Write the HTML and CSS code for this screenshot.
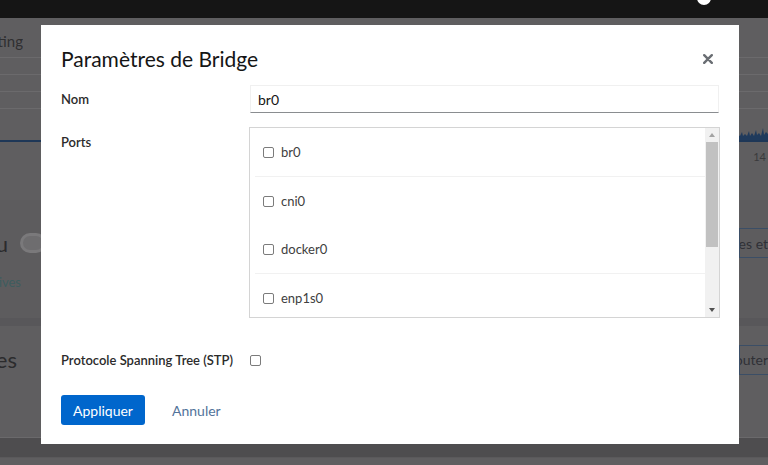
FILE: index.html
```html
<!DOCTYPE html>
<html lang="fr">
<head>
<meta charset="utf-8">
<title>Paramètres de Bridge</title>
<link rel="stylesheet" href="styles.css">
</head>
<body>
<div class="topbar"><span class="avatar"></span></div>

<div class="page">
  <section class="sec-a">
    <div class="hdr">
      <div class="clip-left big"><span>Routing</span></div>
    </div>
    <div class="trow"></div>
    <div class="trow"></div>
    <div class="trow"></div>
    <div class="trow"></div>
    <div class="chart">
      <svg class="spikes" width="30" height="14" viewBox="0 0 30 14">
        <path d="M0 14 L0 9 L2 10 L4 6 L5 10 L7 8 L9 10 L11 5 L12 10 L14 7 L16 10 L18 4 L19 9 L21 7 L23 10 L25 2 L26 9 L28 6 L30 8 L30 14 Z" fill="#1f3a5c"/>
      </svg>
    </div>
  </section>
  <section class="sec-b">
    <span class="axis">14</span>
  </section>
  <section class="sec-c">
    <div class="line-c">
      <div class="left-c">
        <div class="clip-left huge hu"><span>Pare-feu</span></div>
        <span class="toggle"></span>
      </div>
      <span class="obtn">Modifier règles et</span>
    </div>
    <div class="clip-left small link"><span>Zones actives</span></div>
  </section>
  <div class="band"></div>
  <section class="sec-e">
    <div class="clip-left huge"><span>Interfaces</span></div>
    <span class="obtn">Ajouter</span>
  </section>
  <div class="foot"></div>
</div>

<div class="modal" role="dialog" aria-label="Paramètres de Bridge">
  <div class="modal-head">
    <h1 class="title">Paramètres de Bridge</h1>
    <button class="close" aria-label="Fermer">
      <svg width="10" height="10" viewBox="0 0 10 10"><path d="M1.2 1.2 L8.8 8.8 M8.8 1.2 L1.2 8.8" stroke="#6a6e73" stroke-width="2.4" stroke-linecap="round"/></svg>
    </button>
  </div>

  <div class="field f-name">
    <label class="label">Nom</label>
    <div class="control"><div class="input">br0</div></div>
  </div>

  <div class="field f-ports">
    <label class="label label-top">Ports</label>
    <div class="control">
      <div class="list">
        <div class="items">
          <div class="item sep"><span class="cb"></span><span>br0</span></div>
          <div class="item"><span class="cb"></span><span>cni0</span></div>
          <div class="item sep"><span class="cb"></span><span>docker0</span></div>
          <div class="item"><span class="cb"></span><span>enp1s0</span></div>
        </div>
        <div class="scrollbar">
          <span class="arrow-up"></span>
          <span class="thumb"></span>
          <span class="track"></span>
          <span class="arrow-down"></span>
        </div>
      </div>
    </div>
  </div>

  <div class="field f-stp">
    <label class="label">Protocole Spanning Tree (STP)</label>
    <div class="control"><span class="cb"></span></div>
  </div>

  <div class="actions">
    <button class="primary">Appliquer</button>
    <button class="link-btn">Annuler</button>
  </div>
</div>
</body>
</html>
```
FILE: styles.css
```css
* { box-sizing: border-box; }
html, body { margin: 0; padding: 0; }
body {
  width: 768px;
  height: 465px;
  overflow: hidden;
  position: relative;
  background: #5f5e60;
  font-family: Lato, "Liberation Sans", sans-serif;
  color: #151515;
}

.topbar {
  height: 18px;
  background: #151515;
  display: flex;
  justify-content: flex-end;
  padding-right: 57px;
  overflow: hidden;
}
.avatar {
  width: 14px;
  height: 14px;
  margin-top: -9px;
  border-radius: 50%;
  background: #ffffff;
}

/* dimmed background page */
.page { display: flex; flex-direction: column; }
.clip-left {
  display: flex;
  justify-content: flex-end;
  overflow: hidden;
  white-space: nowrap;
}
.sec-a { height: 124px; display: flex; flex-direction: column; border-bottom: 2px solid #1e3757; }
.hdr { height: 39px; display: flex; align-items: center; padding-top: 6px; }
.hdr .clip-left { width: 23px; }
.big { font-size: 15px; color: #2f2f31; }
.trow { height: 17px; border-top: 1px solid #6b6a6c; }
.chart { flex: 1; display: flex; justify-content: flex-end; align-items: flex-end; }
.spikes { display: block; }
.sec-b { height: 58px; display: flex; justify-content: flex-end; padding: 8px 2px 0 0; }
.axis { font-size: 11px; color: #3a3a3c; }
.sec-c { height: 118px; display: flex; flex-direction: column; padding-top: 28px; background: #5d5c5e; }
.line-c { display: flex; justify-content: space-between; align-items: center; height: 30px; }
.left-c { display: flex; align-items: center; gap: 12px; }
.huge { font-size: 22px; color: #2b2b2d; width: 16px; }
.huge.hu { width: 8px; }
.toggle {
  width: 26px; height: 20px; border-radius: 10px;
  background: #6e6d6f; border: 3px solid #7a797b;
}
.obtn {
  width: 29px;
  height: 30px;
  border: 1px solid #3b4e66;
  border-right: none;
  font-size: 14px;
  color: #2f3036;
  white-space: nowrap;
  overflow: hidden;
  display: flex;
  align-items: center;
  direction: rtl;
}
.small { width: 21px; font-size: 13px; margin-top: 16px; }
.link { color: #3e5c5e; }
.band { height: 8px; background: #58575a; }
.sec-e {
  height: 112px;
  display: flex;
  justify-content: space-between;
  align-items: center;
  padding-bottom: 44px;
  border-bottom: 1px solid #6a696b;
}
.sec-e .huge { width: 17px; }
.foot { height: 20px; background: #4e4d4f; border-bottom: 1px solid #5a595b; }

/* modal */
.modal {
  position: absolute;
  left: 41px;
  top: 25px;
  width: 698px;
  height: 419px;
  background: #ffffff;
  padding: 22px 20px 19px 20px;
  display: flex;
  flex-direction: column;
}
.modal-head {
  display: flex;
  justify-content: space-between;
  align-items: center;
  height: 24px;
}
.title {
  margin: 0;
  font-size: 21px;
  font-weight: 400;
  line-height: 24px;
  color: #151515;
}
.close {
  border: none;
  background: none;
  padding: 0;
  margin-right: 6px;
  width: 10px;
  height: 10px;
  display: flex;
}

.field { display: flex; }
.label {
  width: 189px;
  flex: none;
  font-size: 13px;
  font-weight: 600;
  color: #2b2b2b;
}
.control { flex: 1; display: flex; align-items: center; }
.f-name { margin-top: 14px; height: 28px; align-items: center; }
.input {
  width: 100%;
  height: 28px;
  border: 1px solid #f0f0f0;
  border-bottom: 1px solid #8a8d90;
  padding-left: 7px;
  display: flex;
  align-items: center;
  font-size: 14px;
  color: #151515;
}
.f-ports { margin-top: 14px; }
.label-top { padding-top: 7px; line-height: 16px; }
.f-ports .control { margin: 0 -1px; }
.list {
  width: 100%;
  height: 191px;
  border: 1px solid #d4d4d4;
  display: flex;
  overflow: hidden;
}
.items { flex: 1; overflow: hidden; }
.item {
  height: 48px;
  display: flex;
  align-items: center;
  gap: 7px;
  padding-left: 13px;
  font-size: 13px;
  color: #404040;
}
.item.sep { height: 49px; border-bottom: 1px solid #f1f1f1; margin-left: 5px; padding-left: 8px; }
.cb {
  width: 11px;
  height: 11px;
  border: 1px solid #7b7b7b;
  border-radius: 2px;
  background: #fff;
  flex: none;
}
.scrollbar {
  width: 14px;
  flex: none;
  background: #f1f1f1;
  display: flex;
  flex-direction: column;
  align-items: center;
}
.arrow-up {
  margin-top: 5px;
  width: 0; height: 0;
  border-left: 3.5px solid transparent;
  border-right: 3.5px solid transparent;
  border-bottom: 4px solid #a3a3a3;
}
.thumb {
  margin-top: 5px;
  width: 12px;
  height: 105px;
  background: #c1c1c1;
}
.track { flex: 1; }
.arrow-down {
  margin-bottom: 5px;
  width: 0; height: 0;
  border-left: 3.5px solid transparent;
  border-right: 3.5px solid transparent;
  border-top: 4px solid #505050;
}
.f-stp { margin-top: 32px; height: 20px; align-items: center; }

.actions { margin-top: 25px; display: flex; align-items: center; }
.primary {
  width: 84px;
  height: 30px;
  border: none;
  border-radius: 3px;
  background: #0066cc;
  color: #ffffff;
  font-family: inherit;
  font-size: 14px;
  padding: 0;
}
.link-btn {
  margin-left: 27px;
  border: none;
  background: none;
  padding: 0;
  font-family: inherit;
  font-size: 14px;
  color: #52739a;
}
```
